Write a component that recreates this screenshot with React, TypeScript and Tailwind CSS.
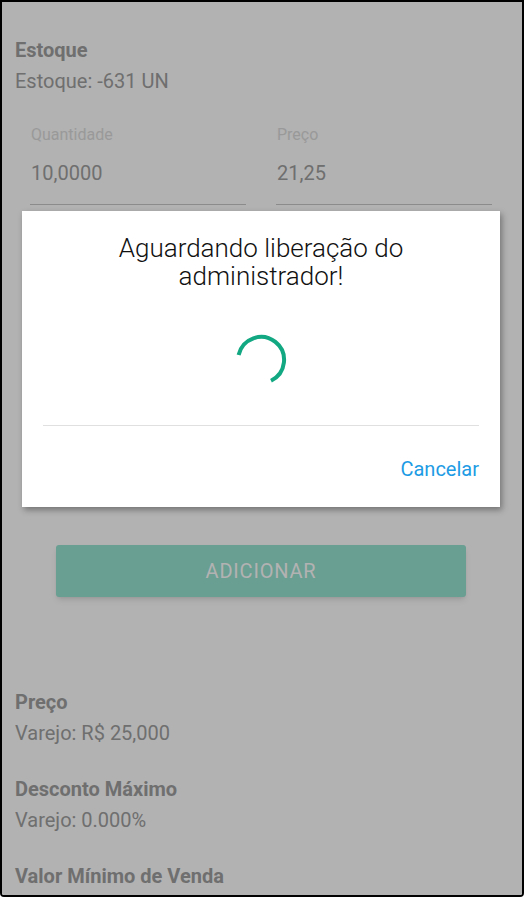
import React from 'react';

const font = { fontFamily: 'Roboto, "Noto Sans", sans-serif' };

const Field: React.FC<{ label: string; value: string }> = ({ label, value }) => (
  <div className="flex-1">
    <div className="text-[16px] leading-[20px] text-[#dcdcdc] pl-[1px]">{label}</div>
    <div className="mt-[16px] pb-[19px] border-b border-[#c8c8c8] text-[20px] leading-[24px] text-[#a0a0a0] pl-[1px]">
      {value}
    </div>
  </div>
);

const Info: React.FC<{ title: string; value: string; className?: string }> = ({ title, value, className }) => (
  <div className={className}>
    <div className="text-[20px] leading-[24px] font-bold text-[#a0a0a0]">{title}</div>
    <div className="mt-[7px] text-[20px] leading-[24px] text-[#a0a0a0]">{value}</div>
  </div>
);

export default function App() {
  return (
    <div style={font} className="w-[524px] h-[897px] border-2 border-black rounded-b-[4px] overflow-hidden">
      <div className="relative h-full bg-white">
        {/* page behind the dialog */}
        <div className="px-[13px] pt-[36px]">
          <Info title="Estoque" value="Estoque: -631 UN" />

          <div className="mt-[32px] pl-[15px] pr-[17px] flex gap-[30px]">
            <Field label="Quantidade" value="10,0000" />
            <Field label="Preço" value="21,25" />
          </div>

          <div className="mt-[340px] flex justify-center">
            <button className="ml-[-2px] w-[410px] h-[52px] rounded-[3px] bg-[#97e2d1] shadow-md text-white text-[20px] tracking-[0.8px]">
              ADICIONAR
            </button>
          </div>

          <Info className="mt-[93px]" title="Preço" value="Varejo: R$ 25,000" />
          <Info className="mt-[32px]" title="Desconto Máximo" value="Varejo: 0.000%" />
          <Info className="mt-[32px]" title="Valor Mínimo de Venda" value="" />
        </div>

        {/* backdrop */}
        <div className="absolute inset-0 bg-black/30" />

        {/* dialog */}
        <div className="absolute left-[20px] top-[209px] w-[478px] h-[296px] bg-white shadow-[2px_3px_6px_rgba(0,0,0,0.35)] px-[21px] pt-[23px]">
          <div className="text-center text-[26px] leading-[28px] font-light text-[#111]">
            Aguardando liberação do
            <br />
            administrador!
          </div>
          <div className="mt-[44px] flex justify-center">
            <svg width="52" height="52" viewBox="0 0 52 52">
              <path
                d="M 3.6 21 A 23 23 0 1 1 36 46.7"
                fill="none"
                stroke="#12a882"
                strokeWidth="4"
              />
            </svg>
          </div>
          <div className="mt-[39px] h-px bg-[#e0e0e0]" />
          <div className="mt-[31px] flex justify-end">
            <span className="text-[20px] leading-[24px] text-[#1d9be4]">Cancelar</span>
          </div>
        </div>
      </div>
    </div>
  );
}
